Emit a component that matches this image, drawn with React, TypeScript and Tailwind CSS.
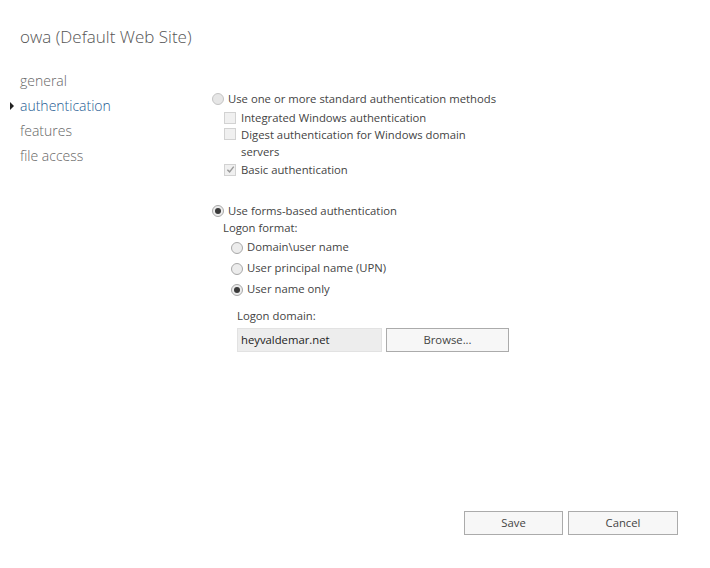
import React from "react";

const font = { fontFamily: '"Open Sans", "Noto Sans", Arial, sans-serif' };

function Radio({ checked, dim }: { checked?: boolean; dim?: boolean }) {
  return (
    <span
      className={`flex h-[12px] w-[12px] shrink-0 items-center justify-center rounded-full border ${
        dim ? "border-[#c4c4c4] bg-[#e6e6e6]" : "border-[#a8a8a8] bg-[#ececec]"
      }`}
    >
      {checked && <span className="h-[6px] w-[6px] rounded-full bg-[#3a3a3a]" />}
    </span>
  );
}

function Check({ checked }: { checked?: boolean }) {
  return (
    <span className="flex h-[12px] w-[12px] shrink-0 items-center justify-center border border-[#d2d2d2] bg-[#f0f0f0]">
      {checked && (
        <svg viewBox="0 0 10 10" className="h-[9px] w-[9px]">
          <path d="M1.5 5.2 L4 7.6 L8.6 1.8" fill="none" stroke="#9a9a9a" strokeWidth="1.6" />
        </svg>
      )}
    </span>
  );
}

export default function App() {
  const nav = ["general", "authentication", "features", "file access"];
  return (
    <div className="relative h-[568px] w-[710px] bg-white text-[11.3px] text-[#444]" style={font}>
      <h1 className="pl-[20px] pt-[26px] text-[17px] font-light leading-[22px] text-[#555]">
        owa (Default Web Site)
      </h1>

      <div className="mt-[20px] flex">
        <nav className="w-[212px] shrink-0">
          {nav.map((item) => (
            <div key={item} className="relative flex h-[25px] items-center pl-[20px] text-[14px] font-light">
              {item === "authentication" && (
                <span className="absolute left-[10px] top-[9px] h-0 w-0 border-y-[4px] border-l-[4px] border-y-transparent border-l-[#222]" />
              )}
              <span className={item === "authentication" ? "text-[#1e5b93]" : "text-[#666]"}>{item}</span>
            </div>
          ))}
        </nav>

        <div className="pt-[22px]">
          <label className="flex items-center gap-[4px] leading-[17px]">
            <Radio dim />
            <span>Use one or more standard authentication methods</span>
          </label>
          <div className="pl-[12px]">
            <label className="mt-[2px] flex items-center gap-[5px] leading-[17px]">
              <Check />
              <span>Integrated Windows authentication</span>
            </label>
            <label className="flex items-start gap-[5px] leading-[17px]">
              <span className="pt-[2px]">
                <Check />
              </span>
              <span className="w-[235px]">Digest authentication for Windows domain servers</span>
            </label>
            <label className="mt-[1px] flex items-center gap-[5px] leading-[17px]">
              <Check checked />
              <span>Basic authentication</span>
            </label>
          </div>

          <label className="mt-[24px] flex items-center gap-[4px] leading-[17px]">
            <Radio checked />
            <span>Use forms-based authentication</span>
          </label>
          <div className="pl-[11px]">
            <div className="leading-[17px]">Logon format:</div>
            <div className="pl-[8px]">
              <label className="mt-[1px] flex h-[21px] items-center gap-[4px]">
                <Radio />
                <span>Domain\user name</span>
              </label>
              <label className="flex h-[21px] items-center gap-[4px]">
                <Radio />
                <span>User principal name (UPN)</span>
              </label>
              <label className="flex h-[21px] items-center gap-[4px]">
                <Radio checked />
                <span>User name only</span>
              </label>
            </div>
            <div className="pl-[14px]">
              <div className="mt-[7px] leading-[17px]">Logon domain:</div>
              <div className="mt-[4px] flex gap-[4px]">
                <div className="flex h-[24px] w-[145px] items-center border border-[#e2e2e2] bg-[#ededed] px-[3px] text-[#222]">
                  heyvaldemar.net
                </div>
                <button className="h-[24px] w-[123px] border border-[#ababab] bg-[#f7f7f7] text-[#444]">
                  Browse...
                </button>
              </div>
            </div>
          </div>
        </div>
      </div>

      <div className="absolute bottom-[33px] right-[32px] flex gap-[5px]">
        <button className="h-[24px] w-[99px] border border-[#ababab] bg-[#f7f7f7] text-[#444]">Save</button>
        <button className="h-[24px] w-[110px] border border-[#ababab] bg-[#f7f7f7] text-[#444]">Cancel</button>
      </div>
    </div>
  );
}
